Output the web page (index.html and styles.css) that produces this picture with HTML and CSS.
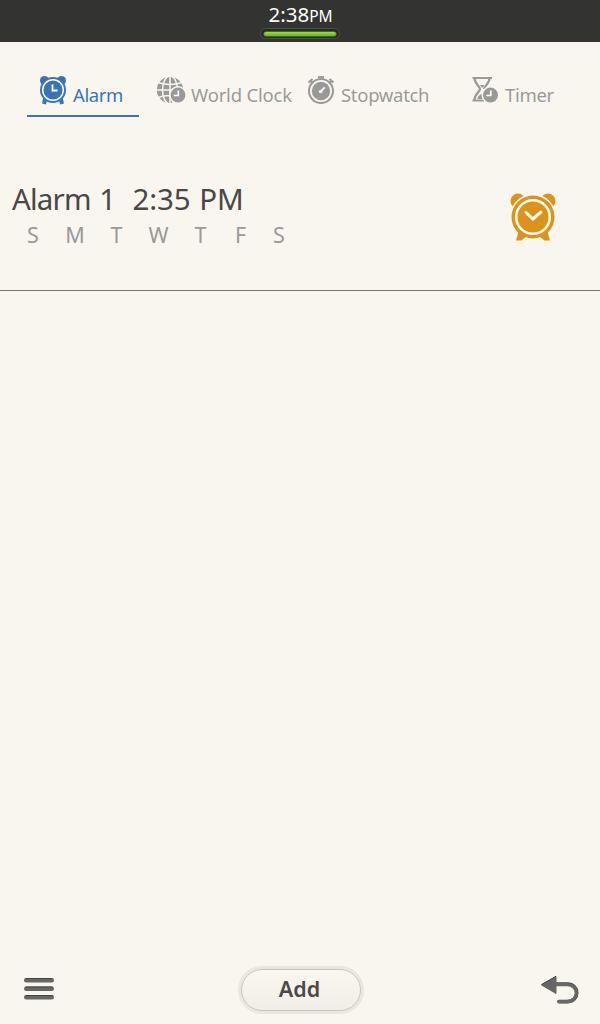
FILE: index.html
```html
<!DOCTYPE html>
<html lang="en">
<head>
<meta charset="utf-8">
<title>Alarm</title>
<link rel="stylesheet" href="styles.css">
</head>
<body>
<header class="status">
  <div class="clock">2:38<span class="period">PM</span></div>
  <div class="battery"><div class="charge"></div></div>
</header>
<nav class="tabs">
  <a class="tab tab-alarm">
    <svg class="icon" width="30" height="34" viewBox="0 0 30 34">
      <g fill="currentColor"><circle cx="5.500" cy="9.500" r="4.500"/><circle cx="22.500" cy="9.500" r="4.500"/></g>
      <path d="M6.500 26l-1.500 7M21.500 26l1.500 7" stroke="currentColor" stroke-width="4"/>
      <circle cx="14" cy="19" r="13" fill="currentColor"/>
      <circle cx="14" cy="19" r="10.300" fill="none" stroke="#fff" stroke-width="1.500"/>
      <path d="M13.500 13.500v6h5" fill="none" stroke="#fff" stroke-width="1.800"/>
    </svg><span class="label">Alarm</span>
  </a>
  <a class="tab tab-world">
    <svg class="icon" width="32" height="34" viewBox="0 0 32 34">
      <circle cx="14" cy="19" r="13.200" fill="currentColor"/>
      <g fill="none" stroke="#f9f6ef" stroke-width="1.500"><path d="M14 5v28M0 19h28M2 11.500q12 4 24 0M2 26.500q12-4 24 0"/><ellipse cx="14" cy="19" rx="7.500" ry="14"/></g>
      <circle cx="22" cy="24" r="9" fill="#f9f6ef"/><circle cx="22" cy="24" r="7.400" fill="currentColor"/>
      <path d="M22.300 19.500v5h-4.500" fill="none" stroke="#fff" stroke-width="1.600"/>
    </svg><span class="label">World Clock</span>
  </a>
  <a class="tab tab-stop">
    <svg class="icon" width="30" height="34" viewBox="0 0 30 34">
      <g fill="none" stroke="currentColor"><circle cx="14" cy="20" r="12" stroke-width="2"/><path d="M11 6.200h6" stroke-width="2.200"/><path d="M14 6v3" stroke-width="3"/><path d="M1.500 11.500l4-3.500M22.500 8l4 3.500M3.500 9.500l2.500 3M24.500 9.500l-2.500 3" stroke-width="2"/></g>
      <circle cx="14" cy="20" r="9.200" fill="currentColor"/>
      <path d="M13.800 20.300l3.400-3.400" stroke="#fff" stroke-width="1.800" stroke-linecap="round"/><circle cx="13.600" cy="20.600" r="1.700" fill="#fff"/>
    </svg><span class="label">Stopwatch</span>
  </a>
  <a class="tab tab-timer">
    <svg class="icon" width="30" height="34" viewBox="0 0 30 34">
      <g fill="none" stroke="currentColor" stroke-width="2.200"><path d="M.5 7h19.500M.5 29.500h13"/><path d="M2.500 7c0 6 5.500 8 5.500 11s-5.500 5-5.500 11M17.500 7c0 6-5.500 8-5.500 11"/></g>
      <path d="M8 14h4.500l-2.500 3zM5.500 28c0-4 4-4 5.500-7l4 2v5z" fill="currentColor"/>
      <circle cx="18.500" cy="24" r="9" fill="#f9f6ef"/><circle cx="18.500" cy="24" r="7.500" fill="currentColor"/>
      <path d="M18.800 19.500v5h-4.500" fill="none" stroke="#fff" stroke-width="1.700"/>
    </svg><span class="label">Timer</span>
  </a>
</nav>
<main class="list">
  <section class="alarm">
    <div class="details">
      <div class="title"><span class="name">Alarm 1</span><span class="time">2:35 PM</span></div>
      <div class="days"><span>S</span><span>M</span><span>T</span><span>W</span><span>T</span><span>F</span><span>S</span></div>
    </div>
    <svg class="toggle" width="46" height="50" viewBox="0 0 46 50">
      <g fill="#dc931b"><circle cx="8" cy="9" r="7.500"/><circle cx="38" cy="9" r="7.500"/></g>
      <circle cx="23" cy="25" r="23" fill="#f9f6ef"/>
      <path d="M9 38l8 6-5.500 4.500H6zM37 38l-8 6 5.500 4.500H40z" fill="#dc931b"/>
      <circle cx="23" cy="25" r="21.500" fill="#dc931b"/>
      <circle cx="23" cy="25" r="16.800" fill="none" stroke="#fffaf0" stroke-width="2.500"/>
      <path d="M16 20.500l7 6.500 8-7" fill="none" stroke="#fffaf0" stroke-width="3" stroke-linecap="round"/>
    </svg>
  </section>
</main>
<footer class="actions">
  <svg class="menu" width="32" height="24" viewBox="0 0 32 24">
    <g fill="#676767"><rect x="1" y="1" width="30" height="4.500" rx="2.250"/><rect x="1" y="9.500" width="30" height="4.500" rx="2.250"/><rect x="1" y="18" width="30" height="4.500" rx="2.250"/></g>
    <path d="M2.500 1.500h27M2.500 10h27M2.500 18.500h27" stroke="#444"/>
  </svg>
  <button class="add">Add</button>
  <svg class="back" width="40" height="32" viewBox="0 0 40 32">
    <path d="M15 9h12c13 0 13 17.500 0 17.500H19" fill="none" stroke="#444" stroke-width="3.600" stroke-linecap="round"/>
    <path d="M15 9.600h12c12.600 0 12.600 17.200 0 17.200H19" fill="none" stroke="#686868" stroke-width="3.400" stroke-linecap="round"/>
    <path d="M1.500 10L16 1.500v17z" fill="#666" stroke="#666" stroke-linejoin="round"/><path d="M1.500 9.500L16 1.300" stroke="#444"/>
  </svg>
</footer>
</body>
</html>
```
FILE: styles.css
```css
* { box-sizing: border-box; }
body { margin: 0; height: 1024px; display: flex; flex-direction: column; background: #f9f6ef; font-family: "Noto Sans", sans-serif; overflow: hidden; }
.status { height: 42px; background: #333332; color: #fff; display: flex; flex-direction: column; align-items: center; }
.clock { height: 28px; line-height: 28px; padding-left: 1px; font-size: 20.5px; white-space: nowrap; }
.period { font-size: 15.5px; }
.battery { width: 80px; height: 11px; padding: 3px; border: 1px solid #4d4d4b; border-radius: 6px; background: #292928; }
.charge { height: 4px; margin-top: -0.5px; border-radius: 2px; background: linear-gradient(#9bdc4c, #64b61b); box-shadow: 0 0 0 0.5px #5ca51c; }
.tabs { height: 75px; padding-left: 27px; display: flex; align-items: flex-end; color: #999; }
.tab { height: 46px; display: flex; align-items: flex-start; overflow: hidden; }
.icon { flex: none; }
.label { margin-top: 11px; line-height: 26px; font-size: 18.5px; letter-spacing: -0.2px; white-space: nowrap; text-shadow: 0 1px 1px #fff; }
.tab-alarm { width: 112px; padding-left: 12px; color: #3b73b9; border-bottom: 2px solid #3b73b9; }
.tab-alarm .label { margin-left: 4px; letter-spacing: -0.4px; }
.tab-world { width: 136px; margin-left: 17px; }
.tab-world .label { margin-left: 3px; }
.tab-stop { width: 124px; margin-left: 15px; }
.tab-stop .label { margin-left: 4px; letter-spacing: -0.3px; }
.tab-timer { width: 90px; margin-left: 41px; }
.tab-timer .label { margin-left: 3px; letter-spacing: -0.3px; }
.list { flex: 1; }
.alarm { height: 174px; display: flex; justify-content: space-between; padding: 62px 44px 0 12px; border-bottom: 1px solid #777572; }
.title { display: flex; height: 40px; line-height: 40px; font-size: 29.5px; color: #484848; white-space: nowrap; }
.name { width: 120.5px; letter-spacing: -0.8px; word-spacing: 1.5px; }
.time { letter-spacing: -0.1px; word-spacing: 1px; }
.days { display: grid; grid-template-columns: 42px 42px 41px 43px 41px 39px 38px; height: 32px; line-height: 32px; text-align: center; font-size: 21.5px; color: #999; }
.toggle { margin-top: 13px; }
.actions { height: 64px; padding: 4px 20px 12px 23px; display: grid; grid-template-columns: 1fr 124px 1fr; align-items: center; }
.menu { margin-top: 2px; }
.back { justify-self: end; margin-top: 6px; }
.add { width: 120px; height: 42px; margin: 4px 0 0 1px; padding: 0 2px 3px 0; border: 1px solid #c6c5be; border-radius: 21px; background: linear-gradient(#faf7f1, #f1eee8); box-shadow: 0 0 0 3px #e8e7e0; color: #4a4a4a; font: 600 21.5px "Noto Sans", sans-serif; }
```
